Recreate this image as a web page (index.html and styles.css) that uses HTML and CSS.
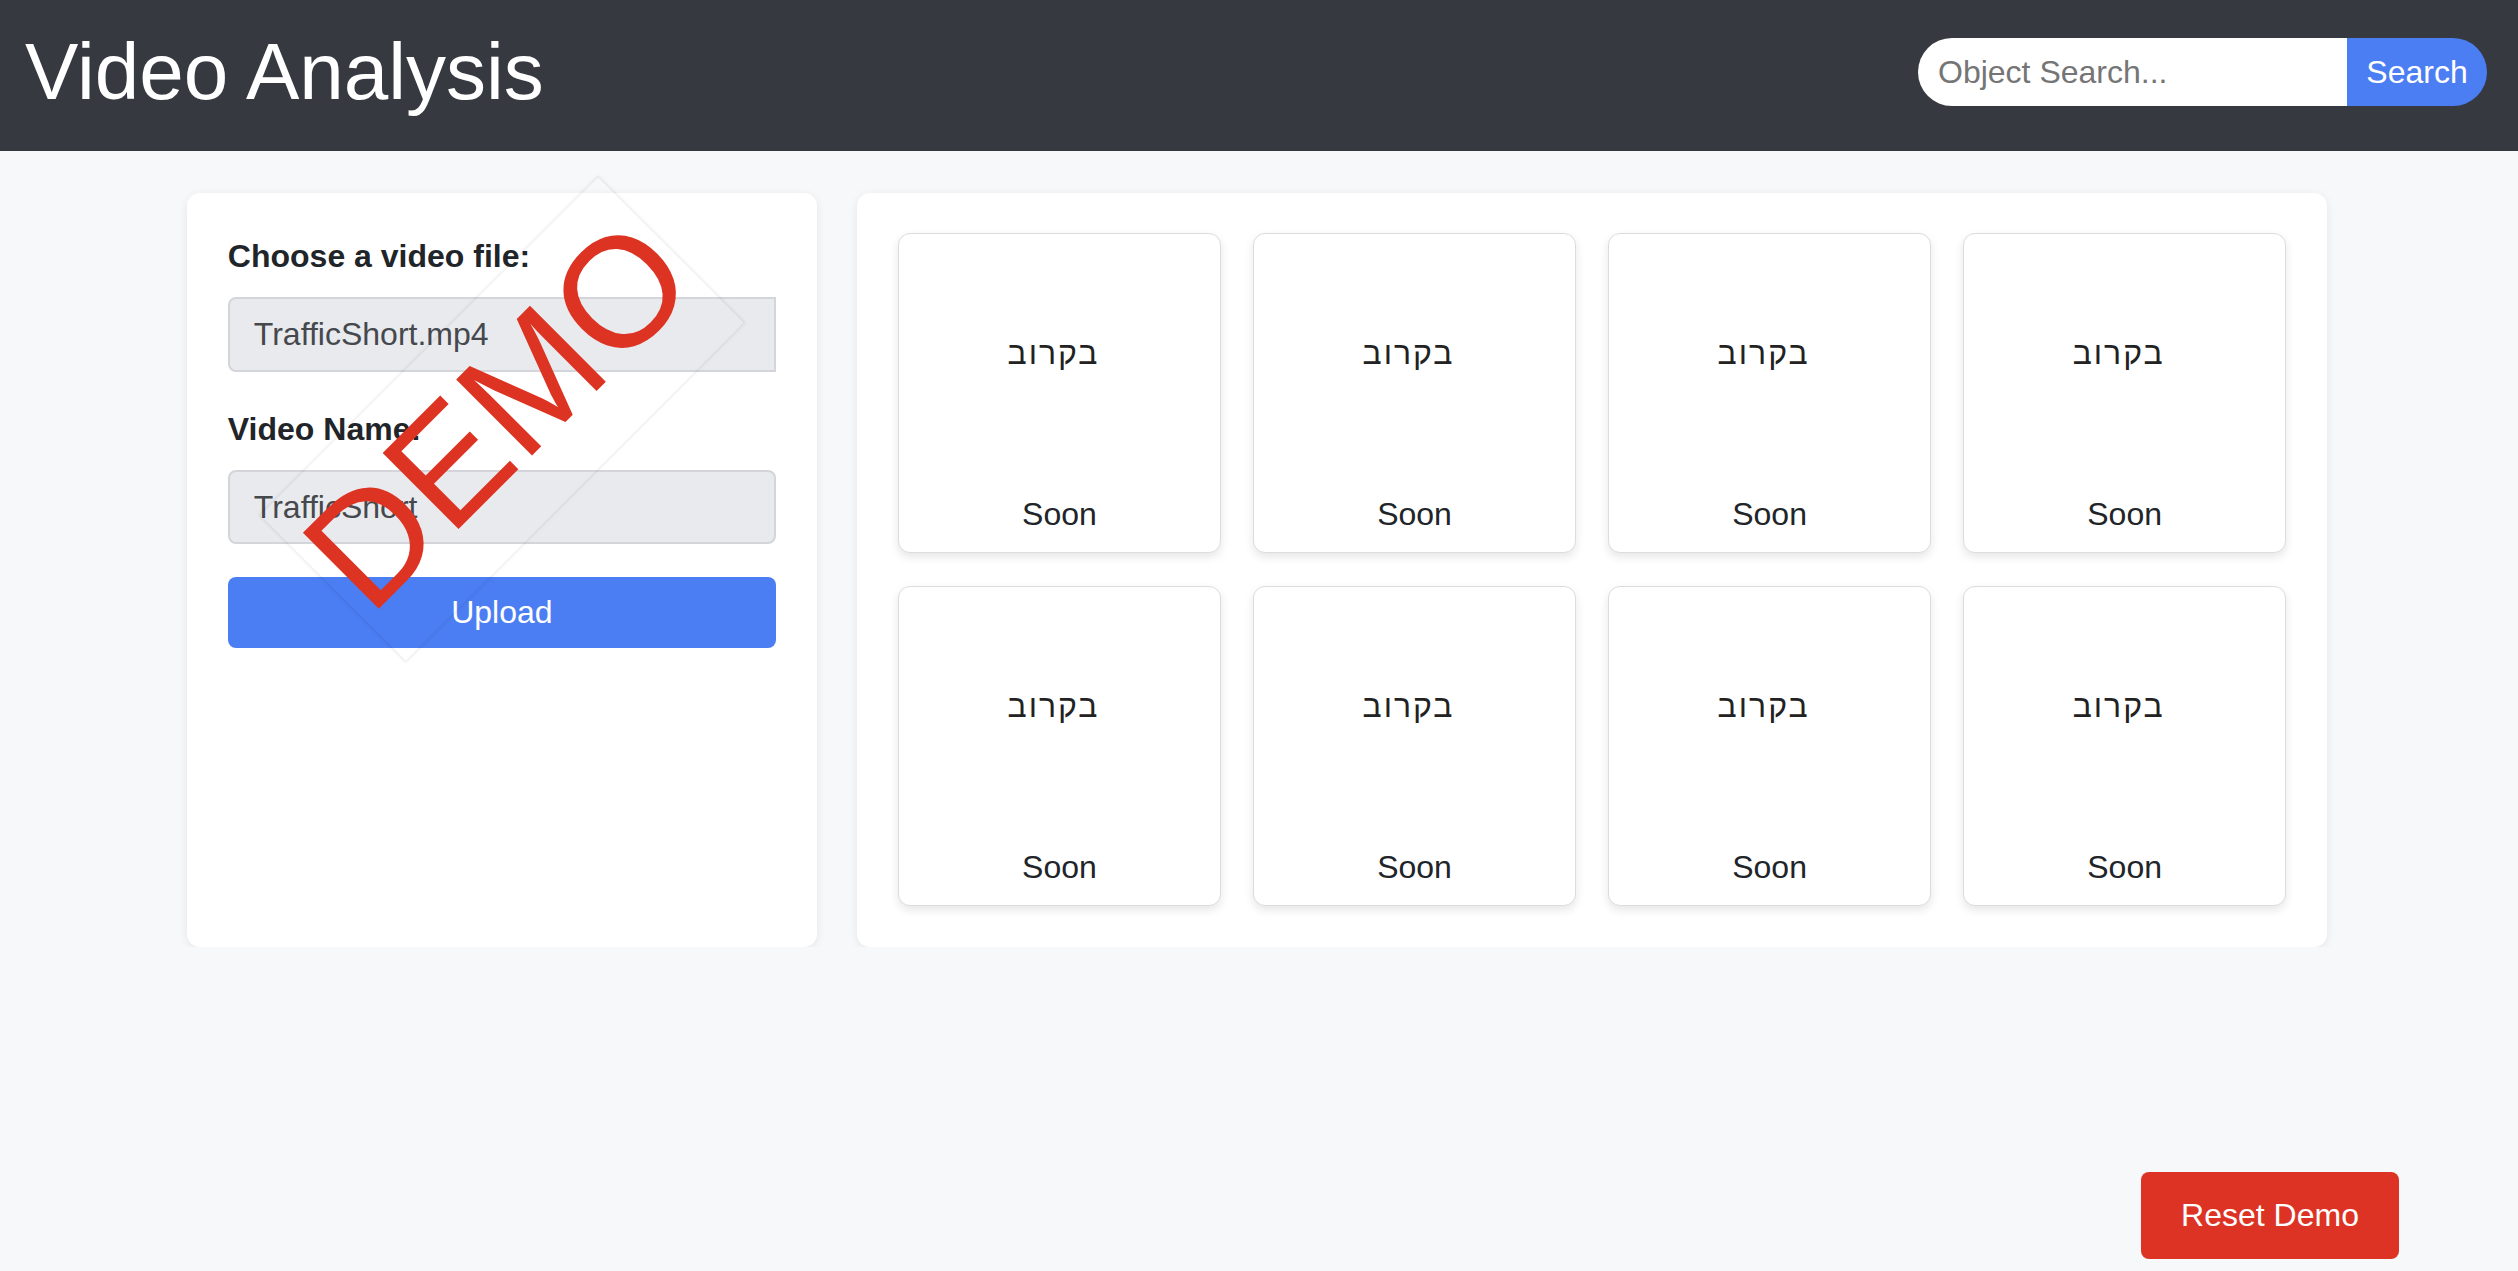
FILE: index.html
```html
<!DOCTYPE html>
<html lang="en">
<head>
<meta charset="utf-8">
<title>Video Analysis</title>
<link rel="stylesheet" href="styles.css">
</head>
<body>
<header class="topbar">
  <h1 class="title">Video Analysis</h1>
  <form class="search">
    <input class="search-input" type="text" placeholder="Object Search...">
    <button class="search-btn" type="button">Search</button>
  </form>
</header>

<main class="layout">
  <section class="card upload-card">
    <label class="field-label">Choose a video file:</label>
    <div class="field field-file">TrafficShort.mp4</div>
    <label class="field-label">Video Name:</label>
    <div class="field field-name">TrafficShort</div>
    <button class="upload-btn" type="button">Upload</button>
    <div class="watermark"><span>DEMO</span></div>
  </section>

  <section class="card gallery-card">
    <div class="grid">
      <div class="tile"><div class="thumb" dir="rtl">בקרוב</div><div class="caption">Soon</div></div>
      <div class="tile"><div class="thumb" dir="rtl">בקרוב</div><div class="caption">Soon</div></div>
      <div class="tile"><div class="thumb" dir="rtl">בקרוב</div><div class="caption">Soon</div></div>
      <div class="tile"><div class="thumb" dir="rtl">בקרוב</div><div class="caption">Soon</div></div>
      <div class="tile"><div class="thumb" dir="rtl">בקרוב</div><div class="caption">Soon</div></div>
      <div class="tile"><div class="thumb" dir="rtl">בקרוב</div><div class="caption">Soon</div></div>
      <div class="tile"><div class="thumb" dir="rtl">בקרוב</div><div class="caption">Soon</div></div>
      <div class="tile"><div class="thumb" dir="rtl">בקרוב</div><div class="caption">Soon</div></div>
    </div>
  </section>
</main>

<button class="reset-btn" type="button">Reset Demo</button>
</body>
</html>
```

FILE: styles.css
```css
* {
  box-sizing: border-box;
}

html, body {
  margin: 0;
  padding: 0;
}

body {
  background: #f7f8fa;
  font-family: "Liberation Sans", Arial, sans-serif;
  font-size: 32px;
  color: #212529;
}

.topbar {
  height: 151px;
  background: #363a40;
  display: flex;
  align-items: center;
  justify-content: space-between;
  padding: 0 31px 7px 25px;
}

.title {
  margin: 0;
  font-size: 80px;
  font-weight: normal;
  line-height: 92px;
  color: #ffffff;
}

.search {
  display: flex;
  height: 68px;
  margin: 0;
}

.search-input {
  width: 429px;
  height: 68px;
  border: none;
  outline: none;
  border-radius: 34px 0 0 34px;
  background: #ffffff;
  padding: 0 20px;
  font-family: "Liberation Sans", Arial, sans-serif;
  font-size: 32px;
  color: #333;
}

.search-input::placeholder {
  color: #757575;
}

.search-btn {
  width: 140px;
  height: 68px;
  border: none;
  border-radius: 0 34px 34px 0;
  background: #4c7ef3;
  color: #ffffff;
  font-family: "Liberation Sans", Arial, sans-serif;
  font-size: 32px;
  padding: 0;
}

.layout {
  width: 85%;
  margin: 42px auto 0 calc(7.5% - 2px);
  display: flex;
  gap: 40px;
  align-items: stretch;
}

.card {
  background: #ffffff;
  border-radius: 13px;
  box-shadow: 0 2px 10px rgba(0, 0, 0, 0.08);
}

.upload-card {
  flex: 0 0 calc((100% - 40px) * 0.3);
  position: relative;
  padding: 45px 41px 40px;
  display: flex;
  flex-direction: column;
  align-items: stretch;
}

.field-label {
  display: block;
  font-weight: bold;
  font-size: 32px;
  line-height: 37px;
  margin-bottom: 22px;
  color: #212529;
}

.field {
  height: 75px;
  background: #e9eaee;
  border: 2px solid #d3d5da;
  border-radius: 8px;
  padding: 0 24px;
  display: flex;
  align-items: center;
  color: #45484d;
  font-size: 32px;
}

.field-file {
  border-radius: 8px 0 0 8px;
  margin-bottom: 39px;
}

.field-name {
  height: 74px;
  margin-bottom: 33px;
}

.upload-btn {
  height: 71px;
  border: none;
  border-radius: 8px;
  background: #4c7ef3;
  color: #ffffff;
  font-family: "Liberation Sans", Arial, sans-serif;
  font-size: 32px;
  padding: 0;
}

.watermark {
  position: absolute;
  left: 50%;
  top: 226px;
  width: 480px;
  height: 208px;
  transform: translate(-50%, -50%) rotate(-45deg);
  border: 1px solid rgba(0, 0, 0, 0.07);
  box-shadow: 0 0 4px rgba(0, 0, 0, 0.08);
  display: flex;
  align-items: center;
  justify-content: center;
  padding-bottom: 14px;
  pointer-events: none;
}

.watermark span {
  font-size: 156px;
  line-height: 1;
  color: #dd3322;
  white-space: nowrap;
}

.gallery-card {
  flex: 1 1 0;
  min-width: 0;
  padding: 40px 41px 41px;
}

.grid {
  display: grid;
  grid-template-columns: repeat(4, minmax(0, 1fr));
  column-gap: 32px;
  row-gap: 33px;
}

.tile {
  height: 320px;
  border: 1px solid #dcdcdc;
  border-radius: 12px;
  background: #ffffff;
  box-shadow: 0 4px 10px rgba(0, 0, 0, 0.1);
  display: flex;
  flex-direction: column;
  align-items: center;
}

.thumb {
  height: 239px;
  width: 100%;
  display: flex;
  align-items: center;
  justify-content: center;
  font-size: 32px;
  line-height: 37px;
  letter-spacing: 2px;
  color: #222;
  padding-right: 12px;
}

.caption {
  margin-top: 23px;
  font-size: 32px;
  line-height: 37px;
  color: #212529;
}

.reset-btn {
  position: fixed;
  right: 119px;
  bottom: 12px;
  width: 258px;
  height: 87px;
  border: none;
  border-radius: 8px;
  background: #dc3324;
  color: #ffffff;
  font-family: "Liberation Sans", Arial, sans-serif;
  font-size: 32px;
  padding: 0;
}
```
